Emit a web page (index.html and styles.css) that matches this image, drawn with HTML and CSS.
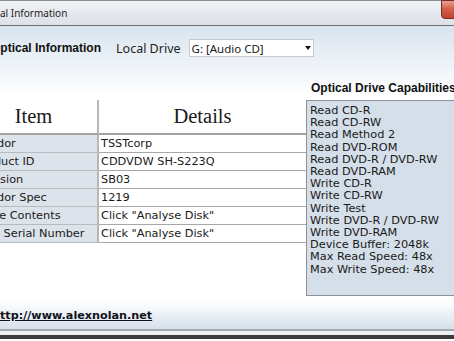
FILE: index.html
```html
<!DOCTYPE html>
<html lang="en">
<head>
    <meta charset="UTF-8">
    <title>Optical Information</title>
    <link rel="stylesheet" href="styles.css">
</head>
<body>
<div class="window">
    <div class="titlebar">
        <span class="title">Optical Information</span>
        <span class="close"></span>
    </div>
    <div class="content">
        <div class="toolbar">
            <h1>Optical Information</h1>
            <label for="drive">Local Drive</label>
            <div class="select" id="drive">
                <span>G: [Audio CD]</span>
                <span class="arrow"></span>
            </div>
        </div>
        <div class="main">
            <table class="info">
                <thead>
                    <tr><th class="item">Item</th><th>Details</th></tr>
                </thead>
                <tbody>
                    <tr><td class="item">Vendor</td><td>TSSTcorp</td></tr>
                    <tr><td class="item">Product ID</td><td>CDDVDW SH-S223Q</td></tr>
                    <tr><td class="item">Revision</td><td>SB03</td></tr>
                    <tr><td class="item">Vendor Spec</td><td>1219</td></tr>
                    <tr><td class="item">Drive Contents</td><td>Click "Analyse Disk"</td></tr>
                    <tr><td class="item">Disc Serial Number</td><td>Click "Analyse Disk"</td></tr>
                </tbody>
            </table>
            <div class="caps">
                <h2>Optical Drive Capabilities</h2>
                <ul>
                    <li>Read CD-R</li>
                    <li>Read CD-RW</li>
                    <li>Read Method 2</li>
                    <li>Read DVD-ROM</li>
                    <li>Read DVD-R / DVD-RW</li>
                    <li>Read DVD-RAM</li>
                    <li>Write CD-R</li>
                    <li>Write CD-RW</li>
                    <li>Write Test</li>
                    <li>Write DVD-R / DVD-RW</li>
                    <li>Write DVD-RAM</li>
                    <li>Device Buffer: 2048k</li>
                    <li>Max Read Speed: 48x</li>
                    <li>Max Write Speed: 48x</li>
                </ul>
            </div>
        </div>
        <div class="footer">
            <a href="#">http://www.alexnolan.net</a>
        </div>
    </div>
</div>
</body>
</html>
```

FILE: styles.css
```css
body {
    margin: 0;
    padding: 0;
    width: 454px;
    height: 341px;
    overflow: hidden;
    background: #fff;
    font-family: 'DejaVu Sans', Verdana, sans-serif;
    color: #1a1a1a;
}

.window {
    width: 454px;
    overflow: hidden;
}

.titlebar {
    display: flex;
    align-items: center;
    justify-content: space-between;
    background: linear-gradient(#f1f3f6, #e3e7ec 60%, #dde2e8);
    border-top: 1px solid #8a8e93;
    border-bottom: 1px solid #6e7277;
    box-sizing: border-box;
    height: 26px;
    position: relative;
}

.title {
    font-family: 'Noto Sans', 'Open Sans', sans-serif;
    font-size: 10px;
    margin-left: -25px;
    color: #1e1e1e;
}

.close {
    position: absolute;
    top: -1px;
    left: 441px;
    width: 20px;
    height: 17px;
    border: 1px solid #7a2a22;
    border-radius: 0 0 0 4px;
    background: linear-gradient(#e8a293, #d4604c 45%, #c4422e);
}

.content {
    background: linear-gradient(#d9e4ef 0, #ffffff 70px);
}

.toolbar {
    display: flex;
    align-items: center;
    height: 18px;
    padding-top: 13px;
}

.toolbar h1 {
    font-family: 'Liberation Sans', Arial, sans-serif;
    font-size: 12px;
    font-weight: bold;
    margin: 0 0 0 -9px;
    color: #111;
}

.toolbar label {
    font-family: 'Noto Sans', 'Open Sans', sans-serif;
    font-size: 12.5px;
    margin-left: 15px;
    color: #1e1e1e;
}

.select {
    margin-left: 8px;
    width: 121px;
    height: 16px;
    border: 1px solid #c6cacf;
    background: #fff;
    display: flex;
    align-items: center;
    justify-content: space-between;
    padding: 0 0 0 2px;
    font-family: 'Noto Sans', 'Open Sans', sans-serif;
    font-size: 11.5px;
}

.arrow {
    width: 0;
    height: 0;
    margin-right: 2px;
    border-left: 3px solid transparent;
    border-right: 3px solid transparent;
    border-top: 4px solid #111;
}

.main {
    display: flex;
    margin-top: 23px;
    align-items: flex-start;
}

.info {
    width: 336px;
    margin-left: -30px;
    margin-top: 20px;
    border-collapse: separate;
    border-spacing: 0;
    font-size: 11.3px;
    flex: none;
}

.info th {
    font-family: 'Liberation Serif', 'Times New Roman', serif;
    font-weight: normal;
    font-size: 20.5px;
    line-height: 33px;
    padding: 0;
    background: #fff;
    border-bottom: 2px solid #a3a3a3;
    text-align: center;
}

.info th.item {
    width: 127px;
    border-right: 2px solid #b8b8b8;
}

.info td {
    line-height: 17px;
    padding: 0 2px;
    border-bottom: 1px solid #a8a8a8;
    white-space: nowrap;
    overflow: hidden;
}

.info td.item {
    background: #dde3ea;
    padding-left: 6px;
    border-right: 2px solid #b8b8b8;
    border-bottom-color: #b7bcc2;
}

.caps {
    flex: none;
    width: 160px;
}

.caps h2 {
    font-family: 'Liberation Sans', Arial, sans-serif;
    font-size: 12px;
    font-weight: bold;
    line-height: 16px;
    margin: 0;
    padding: 0 0 4px 5px;
    white-space: nowrap;
    color: #111;
}

.caps ul {
    list-style: none;
    margin: 0;
    padding: 4px 0 0 3px;
    height: 190px;
    background: #d5dfe9;
    border: 1px solid #8e9195;
    font-size: 11.3px;
    line-height: 12.2px;
    white-space: nowrap;
}

.footer {
    height: 33px;
    background: linear-gradient(#ffffff 0, #fbfcfd 8px, #d3dee9 35px);
    border-bottom: 2px solid #a4aab1;
    display: flex;
    align-items: center;
}

.footer a {
    font-size: 11.2px;
    font-weight: bold;
    color: #10131c;
    margin-left: -8px;
    margin-top: 6px;
}

.content::after {
    content: "";
    display: block;
    height: 4px;
    background: #eef0f2;
    border-bottom: 4px solid #3c3c3c;
}
```
